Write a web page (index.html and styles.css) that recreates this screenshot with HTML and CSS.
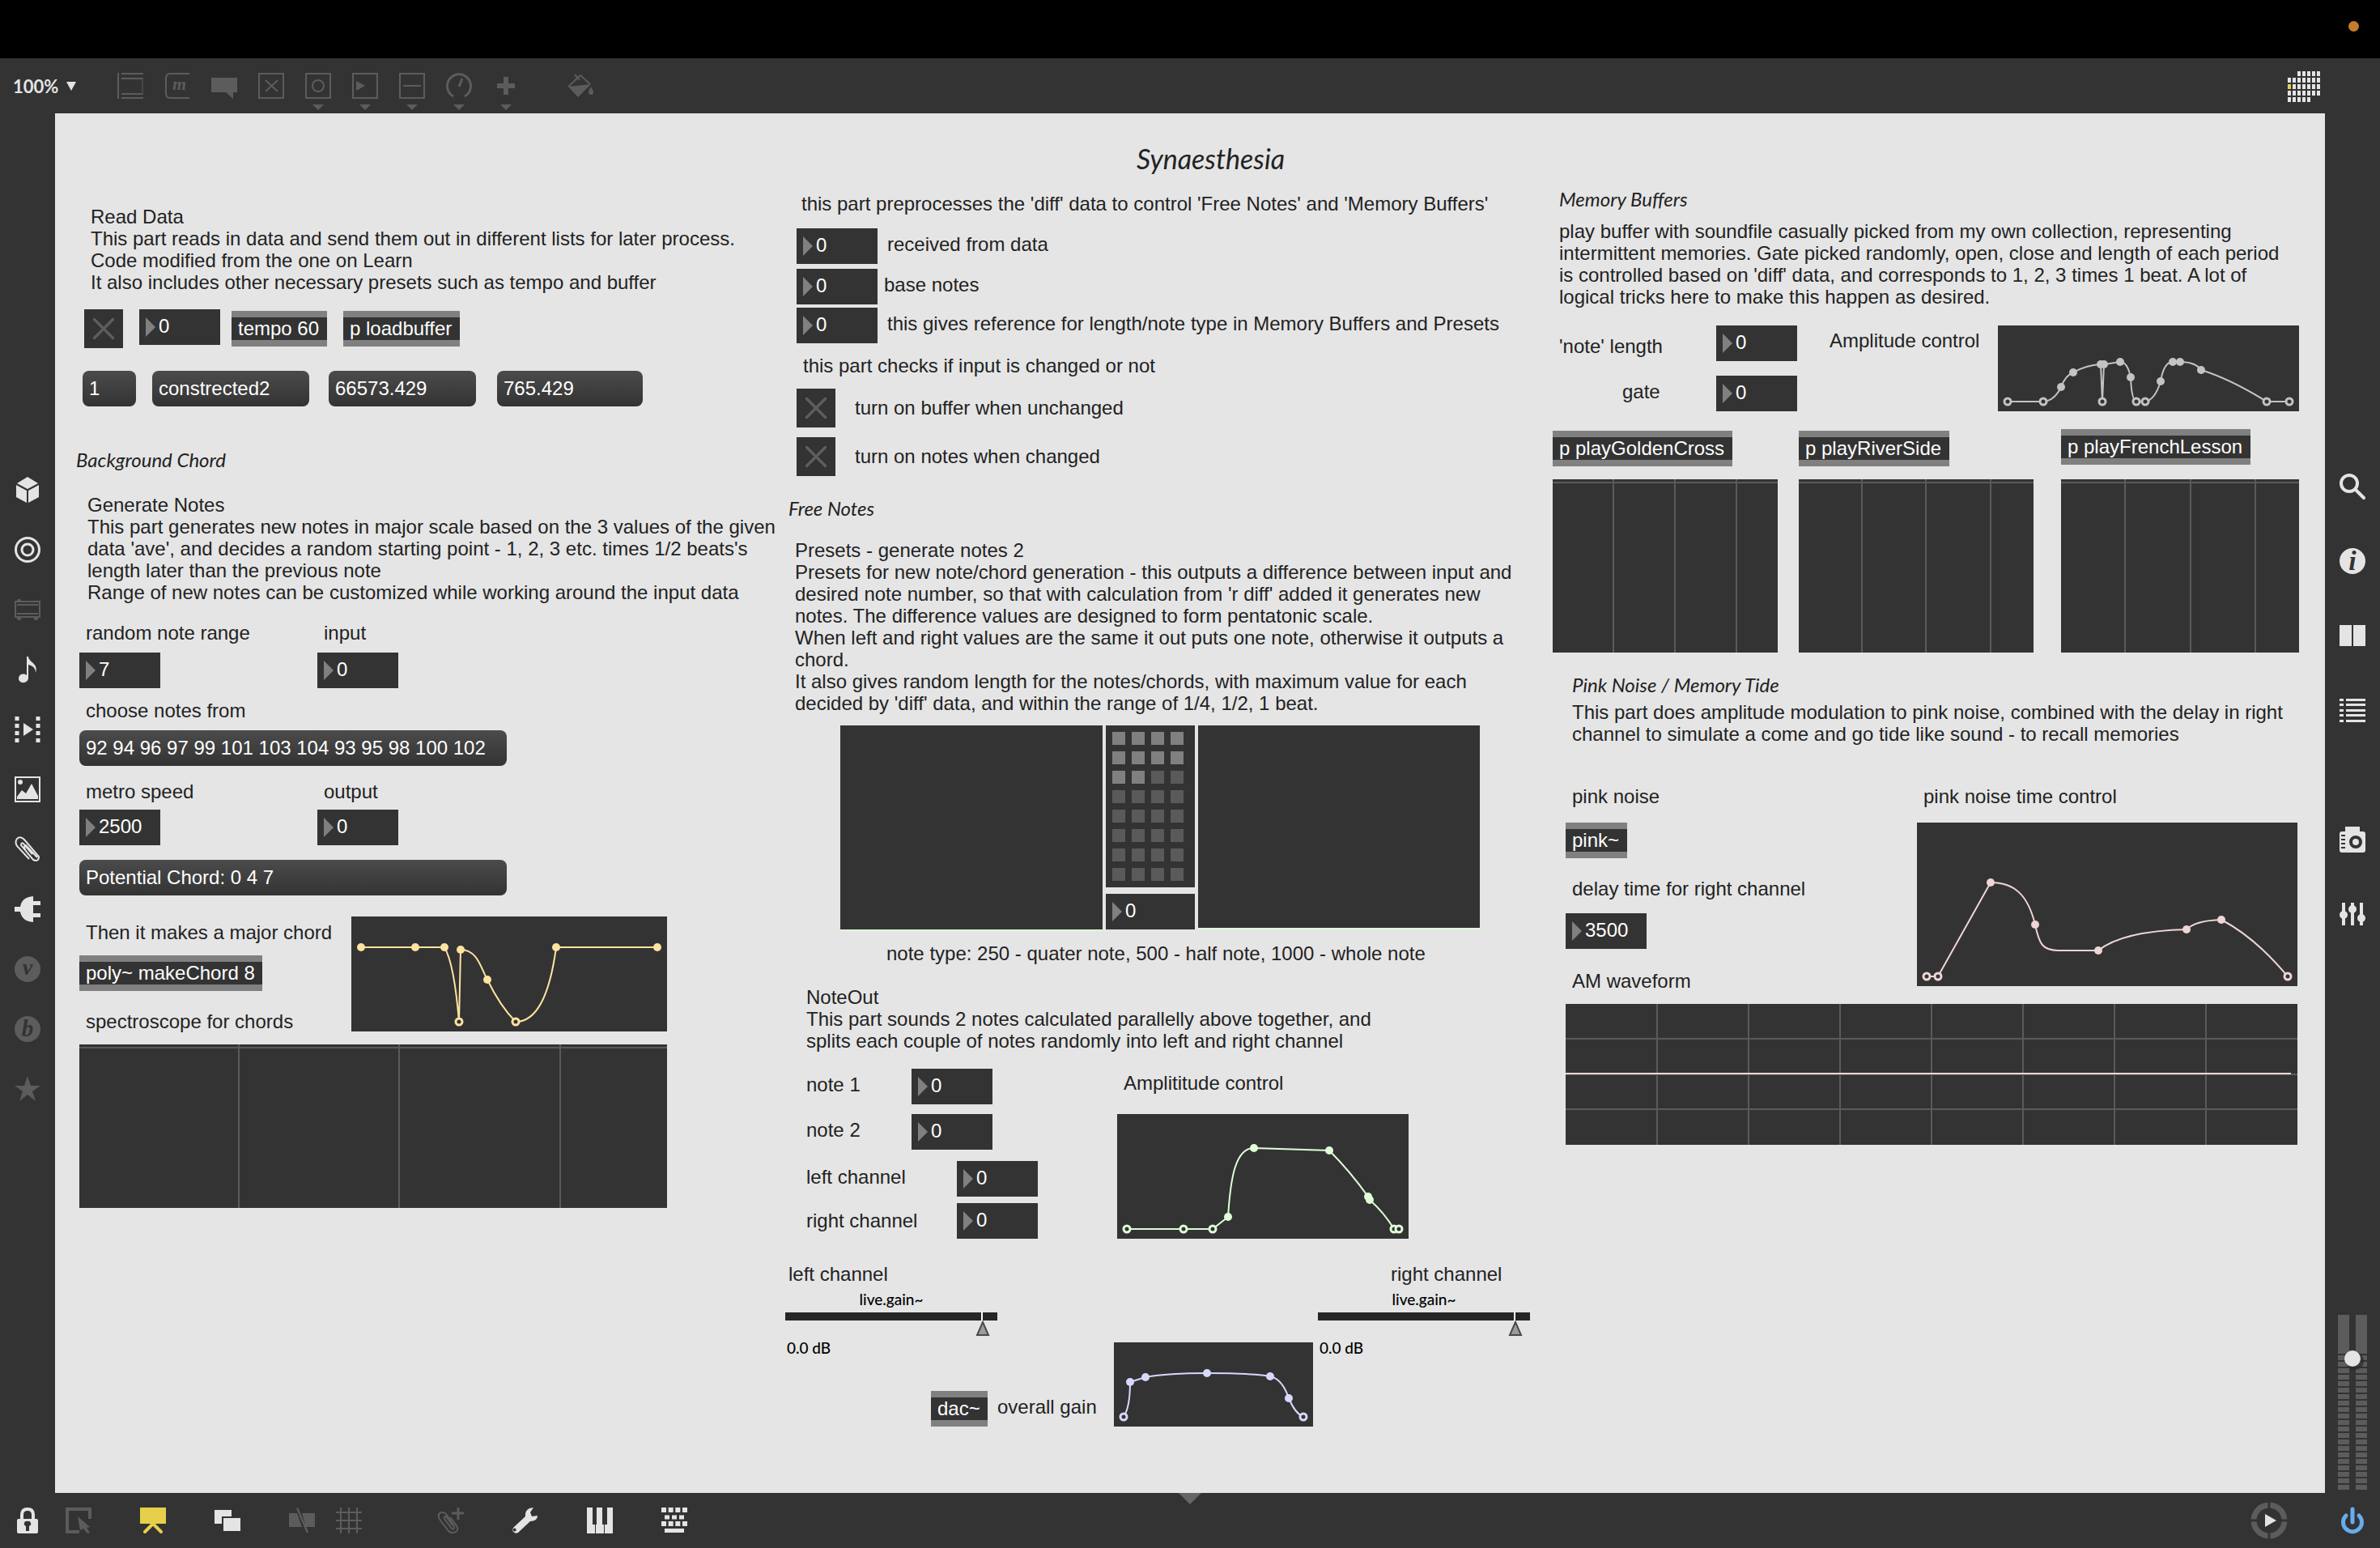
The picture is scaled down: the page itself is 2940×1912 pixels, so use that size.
FILE: index.html
```html
<!DOCTYPE html>
<html lang="en">
<head>
<meta charset="utf-8">
<title>Synaesthesia</title>
<link rel="stylesheet" href="styles.css">
</head>
<body>
<div class="app">
  <div class="menubar"><span class="mic-dot"></span></div>

  <header class="toolbar">
    <div class="zoom">
      <select class="zoom-select" aria-label="Zoom"><option>100%</option></select>
      <svg class="zoom-caret" viewBox="0 0 12 11"><path d="M0 0H12L6 11Z"/></svg>
    </div>
    <div class="tools">
      <button class="tool" aria-label="Object"><svg class="icon" viewBox="0 0 32 32"><path d="M1 0V32M5 1H32M5 7H32M5 26H32M5 31H32" class="line"/><path d="M31 7V26" stroke="#464646" stroke-width="2"/></svg></button>
      <button class="tool" aria-label="Message"><svg class="icon" viewBox="0 0 32 32"><path d="M31 1H7Q2 1 2 7V25Q2 31 7 31H31" class="line"/><text x="10" y="21" class="serif" font-size="22">m</text></svg></button>
      <button class="tool" aria-label="Comment"><svg class="icon" viewBox="0 0 32 32"><path d="M0 6H32V24H27V32L18 24H0Z"/></svg></button>
      <button class="tool" aria-label="Toggle"><svg class="icon" viewBox="0 0 32 32"><path d="M1 1H31V31H1ZM9 9L24 23M24 9L9 23" class="line"/></svg></button>
      <button class="tool" aria-label="Button"><svg class="icon" viewBox="0 0 32 32"><path d="M1 1H31V31H1Z" class="line"/><circle cx="16" cy="16" r="7" class="line"/></svg><svg class="caret" viewBox="0 0 14 7"><path d="M0 0H14L7 7Z"/></svg></button>
      <button class="tool" aria-label="Number"><svg class="icon" viewBox="0 0 32 32"><path d="M1 1H31V31H1Z" class="line"/><path d="M5 10L16 16L5 22Z"/></svg><svg class="caret" viewBox="0 0 14 7"><path d="M0 0H14L7 7Z"/></svg></button>
      <button class="tool" aria-label="Slider"><svg class="icon" viewBox="0 0 32 32"><path d="M1 1H31V31H1ZM5 16H27" class="line"/></svg><svg class="caret" viewBox="0 0 14 7"><path d="M0 0H14L7 7Z"/></svg></button>
      <button class="tool" aria-label="Dial"><svg class="icon" viewBox="0 0 32 32"><path d="M9 29A14.500 14.500 0 1 1 23 29" class="line thick"/><path d="M16 17L20 7" class="line thick"/></svg><svg class="caret" viewBox="0 0 14 7"><path d="M0 0H14L7 7Z"/></svg></button>
      <button class="tool" aria-label="Add"><svg class="icon" viewBox="0 0 32 32"><path d="M13 5H19V13H27V19H19V27H13V19H5V13H13Z"/></svg><svg class="caret" viewBox="0 0 14 7"><path d="M0 0H14L7 7Z"/></svg></button>
      <button class="tool paint" aria-label="Format"><svg class="icon" viewBox="0 0 32 32"><path d="M1 17L29 14L13 30Z"/><path d="M1 17L16 3L28 14M9 2L15 9M9 9L15 4" class="line"/><path d="M29 17Q32 22 32 24A3 3 0 0 1 26 24Q26 21 29 17Z"/></svg></button>
    </div>
    <button class="tool calendar" aria-label="Patching calendar"><svg viewBox="0 0 40 38" width="40" height="38" class="bright">
      <path d="M12 3H40M0 11H40M6 19H40M0 27H40M0 35H28" fill="none" stroke="#e4e4e4" stroke-width="6" stroke-dasharray="4 2"/><path d="M0 16H4V22H0Z" fill="#e6d04b"/></svg></button>
  </header>

  <nav class="side left">
    <button class="side-btn" aria-label="Packages"><svg class="icon" viewBox="0 0 32 32"><path d="M16 0L29 8L16 15L3 8ZM2 10L15 17V32L2 25ZM30 10L17 17V32L30 25Z"/></svg></button>
    <button class="side-btn" aria-label="Objects"><svg class="icon" viewBox="0 0 32 32"><circle cx="16" cy="16" r="14.500" class="line thick"/><circle cx="16" cy="16" r="7" class="line thick"/></svg></button>
    <button class="side-btn dim" aria-label="Amp"><svg class="icon" viewBox="0 0 32 32"><path d="M1 6H31V25H1ZM3 10H29M3 21H29" class="line"/><path d="M3 5V4Q6 1 8 4V5ZM3 26H8V28Q6 30 3 28ZM24 26H29V28Q27 30 24 28Z"/></svg></button>
    <button class="side-btn" aria-label="Audio"><svg class="icon" viewBox="0 0 32 32"><path d="M15 0H17C18 8 30 8 26 20C26 13 21 11 17 10V26C17 34 5 34 5 27C5 22 11 20 15 23Z"/></svg></button>
    <button class="side-btn" aria-label="Video"><svg class="icon" viewBox="0 0 32 32"><path d="M3 0V32M29 0V32" fill="none" stroke="#e4e4e4" stroke-width="5" stroke-dasharray="5 4"/><path d="M11 8L23 16L11 24Z"/></svg></button>
    <button class="side-btn" aria-label="Images"><svg class="icon" viewBox="0 0 32 32"><path d="M1 1H31V31H1Z" class="line"/><circle cx="7" cy="7" r="3"/><path d="M3 28V25L9 17L14 21L21 9L29 24V28Z"/></svg></button>
    <button class="side-btn" aria-label="Files"><svg class="icon" viewBox="0 0 32 32"><path d="M22 22L11 9Q8 7 8 11L23 29Q30 32 30 25L12 4Q7 -1 3 3Q0 7 3 12L18 28M14 18Q10 12 14 11L28 26" class="line"/></svg></button>
    <button class="side-btn" aria-label="Plug-ins"><svg class="icon" viewBox="0 0 32 32"><path d="M23 0V6H32V11H23V21H32V26H23V32Q9 31 7 19H0V13H7Q9 1 23 0Z"/></svg></button>
    <button class="side-btn dim" aria-label="Vizzie"><svg class="icon" viewBox="0 0 32 32"><circle cx="16" cy="16" r="16"/><text x="16" y="23" class="serif cut" font-size="28">v</text></svg></button>
    <button class="side-btn dim" aria-label="Beap"><svg class="icon" viewBox="0 0 32 32"><circle cx="16" cy="16" r="16"/><text x="16" y="25" class="serif cut" font-size="29">b</text></svg></button>
    <button class="side-btn dim" aria-label="Favorites"><svg class="icon" viewBox="0 0 32 32"><path d="M16 0L20 12H32L22 19L26 31L16 23L6 31L10 19L0 12H12Z"/></svg></button>
  </nav>

  <main class="patcher">
    <h1 class="obj title">Synaesthesia</h1>

    <p class="obj comment c-read">Read Data<br>This part reads in data and send them out in different lists for later process.<br>Code modified from the one on Learn<br>It also includes other necessary presets such as tempo and buffer</p>
    <input type="checkbox" class="obj toggle t-read" aria-label="Read data">
    <span class="obj number n-tempo"><input value="0" aria-label="Tempo"></span>
    <div class="obj box b-tempo">tempo 60</div>
    <div class="obj box b-load">p loadbuffer</div>
    <button class="obj message m-index">1</button>
    <button class="obj message m-name">constrected2</button>
    <button class="obj message m-sum">66573.429</button>
    <button class="obj message m-ave">765.429</button>

    <h2 class="obj heading h-chord">Background Chord</h2>
    <p class="obj comment c-generate">Generate Notes<br>This part generates new notes in major scale based on the 3 values of the given<br>data 'ave', and decides a random starting point - 1, 2, 3 etc. times 1/2 beats's<br>length later than the previous note<br>Range of new notes can be customized while working around the input data</p>
    <label class="obj comment c-range" for="range">random note range</label>
    <label class="obj comment c-input" for="input">input</label>
    <span class="obj number n-range"><input id="range" value="7"></span>
    <span class="obj number n-input"><input id="input" value="0"></span>
    <p class="obj comment c-choose">choose notes from</p>
    <button class="obj message m-notes">92 94 96 97 99 101 103 104 93 95 98 100 102</button>
    <label class="obj comment c-metro" for="metro">metro speed</label>
    <label class="obj comment c-output" for="output">output</label>
    <span class="obj number n-metro"><input id="metro" value="2500"></span>
    <span class="obj number n-output"><input id="output" value="0"></span>
    <button class="obj message m-potential">Potential Chord: 0 4 7</button>
    <p class="obj comment c-then">Then it makes a major chord</p>
    <div class="obj box b-poly">poly~ makeChord 8</div>
    <p class="obj comment c-spectro">spectroscope for chords</p>
    <svg class="obj function f-chord" viewBox="434 1132 390 142">
      <path d="M446 1170H549Q561 1190 567 1262L569 1173C590 1173 594 1196 602 1210Q618 1243 637 1262C668 1262 681 1215 687 1170H812"/>
      <g class="dots"><circle cx="446" cy="1170" r="5"/><circle cx="513" cy="1170" r="5"/><circle cx="549" cy="1170" r="5"/><circle cx="569" cy="1173" r="5"/><circle cx="602" cy="1210" r="5"/><circle cx="687" cy="1170" r="5"/><circle cx="812" cy="1170" r="5"/></g>
      <g class="rings"><circle cx="567" cy="1262" r="4"/><circle cx="637" cy="1262" r="4"/></g>
    </svg>
    <div class="obj spectrum s-chord"></div>

    <p class="obj comment c-pre">this part preprocesses the 'diff' data to control 'Free Notes' and 'Memory Buffers'</p>
    <span class="obj number n-received"><input id="received" value="0"></span>
    <label class="obj comment c-received" for="received">received from data</label>
    <span class="obj number n-base"><input id="base" value="0"></span>
    <label class="obj comment c-base" for="base">base notes</label>
    <span class="obj number n-ref"><input id="ref" value="0"></span>
    <label class="obj comment c-ref" for="ref">this gives reference for length/note type in Memory Buffers and Presets</label>
    <p class="obj comment c-checks">this part checks if input is changed or not</p>
    <input type="checkbox" id="unchanged" class="obj toggle t-unchanged">
    <label class="obj comment c-unchanged" for="unchanged">turn on buffer when unchanged</label>
    <input type="checkbox" id="changed" class="obj toggle t-changed">
    <label class="obj comment c-changed" for="changed">turn on notes when changed</label>

    <h2 class="obj heading h-free">Free Notes</h2>
    <p class="obj comment c-presets">Presets - generate notes 2<br>Presets for new note/chord generation - this outputs a difference between input and<br>desired note number, so that with calculation from 'r diff' added it generates new<br>notes. The difference values are designed to form pentatonic scale.<br>When left and right values are the same it out puts one note, otherwise it outputs a<br>chord.<br>It also gives random length for the notes/chords, with maximum value for each<br>decided by 'diff' data, and within the range of 1/4, 1/2, 1 beat.</p>
    <div class="obj multislider ms-left"></div>
    <div class="obj preset">
      <i class="on"></i><i class="on"></i><i class="on"></i><i class="on"></i><i class="on"></i><i class="on"></i><i class="on"></i><i class="on"></i><i class="on"></i><i class="on"></i><i></i><i></i><i></i><i></i><i></i><i></i><i></i><i></i><i></i><i></i><i></i><i></i><i></i><i></i><i></i><i></i><i></i><i></i><i></i><i></i><i></i><i></i>
    </div>
    <span class="obj number n-preset"><input value="0" aria-label="Preset"></span>
    <div class="obj multislider ms-right"></div>
    <p class="obj comment c-type">note type: 250 - quater note, 500 - half note, 1000 - whole note</p>
    <p class="obj comment c-noteout">NoteOut<br>This part sounds 2 notes calculated parallelly above together, and<br>splits each couple of notes randomly into left and right channel</p>
    <label class="obj comment c-note1" for="note1">note 1</label>
    <span class="obj number n-note1"><input id="note1" value="0"></span>
    <label class="obj comment c-note2" for="note2">note 2</label>
    <span class="obj number n-note2"><input id="note2" value="0"></span>
    <label class="obj comment c-left" for="left">left channel</label>
    <span class="obj number n-left"><input id="left" value="0"></span>
    <label class="obj comment c-right" for="right">right channel</label>
    <span class="obj number n-right"><input id="right" value="0"></span>
    <p class="obj comment c-amp">Amplititude control</p>
    <svg class="obj function f-notes" viewBox="1380 1376 360 154">
      <path d="M1392 1518H1498L1517 1503C1520 1455 1526 1418 1549 1418L1642 1421Q1668 1447 1690 1478L1692 1482Q1710 1498 1722 1518H1728"/>
      <g class="dots"><circle cx="1517" cy="1503" r="5"/><circle cx="1549" cy="1418" r="5"/><circle cx="1642" cy="1421" r="5"/><circle cx="1690" cy="1478" r="5"/><circle cx="1692" cy="1482" r="5"/></g>
      <g class="rings"><circle cx="1392" cy="1518" r="4"/><circle cx="1462" cy="1518" r="4"/><circle cx="1498" cy="1518" r="4"/><circle cx="1722" cy="1518" r="4"/><circle cx="1728" cy="1518" r="4"/></g>
    </svg>
    <p class="obj comment c-gain-left">left channel</p>
    <div class="obj gain g-left">
      <label for="gain-left">live.gain~</label>
      <div class="gain-track"><input type="range" id="gain-left" min="0" max="244" value="235"><svg viewBox="0 0 18 19"><path d="M9 2L16 18H2Z"/></svg></div>
      <output>0.0 dB</output>
    </div>
    <p class="obj comment c-gain-right">right channel</p>
    <div class="obj gain g-right">
      <label for="gain-right">live.gain~</label>
      <div class="gain-track"><input type="range" id="gain-right" min="0" max="244" value="235"><svg viewBox="0 0 18 19"><path d="M9 2L16 18H2Z"/></svg></div>
      <output>0.0 dB</output>
    </div>
    <div class="obj box b-dac">dac~</div>
    <p class="obj comment c-overall">overall gain</p>
    <svg class="obj function f-gain" viewBox="1376 1658 246 104">
      <path d="M1388 1750Q1396 1738 1396 1707L1415 1701Q1443 1696 1491 1696Q1548 1696 1569 1700Q1584 1703 1592 1727Q1600 1746 1610 1750"/>
      <g class="dots"><circle cx="1396" cy="1707" r="5"/><circle cx="1415" cy="1701" r="5"/><circle cx="1491" cy="1696" r="5"/><circle cx="1569" cy="1700" r="5"/><circle cx="1592" cy="1727" r="5"/></g>
      <g class="rings"><circle cx="1388" cy="1750" r="4"/><circle cx="1610" cy="1750" r="4"/></g>
    </svg>

    <h2 class="obj heading h-memory">Memory Buffers</h2>
    <p class="obj comment c-play">play buffer with soundfile casually picked from my own collection, representing<br>intermittent memories. Gate picked randomly, open, close and length of each period<br>is controlled based on 'diff' data, and corresponds to 1, 2, 3 times 1 beat. A lot of<br>logical tricks here to make this happen as desired.</p>
    <label class="obj comment c-length" for="length">'note' length</label>
    <span class="obj number n-length"><input id="length" value="0"></span>
    <label class="obj comment c-gate" for="gate">gate</label>
    <span class="obj number n-gate"><input id="gate" value="0"></span>
    <p class="obj comment c-amplitude">Amplitude control</p>
    <svg class="obj function f-memory" viewBox="2468 402 372 106">
      <path d="M2480 496H2524Q2538 495 2546 478Q2552 463 2561 460Q2577 451 2595 450L2597 496L2599 450L2619 447Q2628 447 2632 466Q2633 494 2639 496H2650Q2662 494 2669 471Q2673 447 2684 447H2693Q2712 447 2719 457Q2755 468 2800 496H2828"/>
      <g class="dots"><circle cx="2546" cy="478" r="5"/><circle cx="2561" cy="460" r="5"/><circle cx="2595" cy="450" r="5"/><circle cx="2599" cy="450" r="5"/><circle cx="2619" cy="447" r="5"/><circle cx="2632" cy="466" r="5"/><circle cx="2669" cy="471" r="5"/><circle cx="2684" cy="447" r="5"/><circle cx="2693" cy="447" r="5"/><circle cx="2719" cy="457" r="5"/></g>
      <g class="rings"><circle cx="2480" cy="496" r="4"/><circle cx="2524" cy="496" r="4"/><circle cx="2597" cy="496" r="4"/><circle cx="2639" cy="496" r="4"/><circle cx="2650" cy="496" r="4"/><circle cx="2800" cy="496" r="4"/><circle cx="2828" cy="496" r="4"/></g>
    </svg>
    <div class="obj box b-golden">p playGoldenCross</div>
    <div class="obj box b-river">p playRiverSide</div>
    <div class="obj box b-french">p playFrenchLesson</div>
    <div class="obj spectrum s-golden"></div>
    <div class="obj spectrum s-river"></div>
    <div class="obj spectrum s-french"></div>

    <h2 class="obj heading h-pink">Pink Noise / Memory Tide</h2>
    <p class="obj comment c-tide">This part does amplitude modulation to pink noise, combined with the delay in right<br>channel to simulate a come and go tide like sound - to recall memories</p>
    <p class="obj comment c-pink">pink noise</p>
    <div class="obj box b-pink">pink~</div>
    <label class="obj comment c-delay" for="delay">delay time for right channel</label>
    <span class="obj number n-delay"><input id="delay" value="3500"></span>
    <p class="obj comment c-time">pink noise time control</p>
    <svg class="obj function f-pink" viewBox="2368 1016 470 202">
      <path d="M2380 1206H2394L2459 1090C2488 1090 2505 1105 2514 1142C2519 1166 2523 1174 2543 1174H2592Q2622 1150 2701 1148Q2712 1137 2744 1136Q2786 1158 2826 1206"/>
      <g class="dots"><circle cx="2459" cy="1090" r="5"/><circle cx="2514" cy="1142" r="5"/><circle cx="2592" cy="1174" r="5"/><circle cx="2701" cy="1148" r="5"/><circle cx="2744" cy="1136" r="5"/></g>
      <g class="rings"><circle cx="2380" cy="1206" r="4"/><circle cx="2394" cy="1206" r="4"/><circle cx="2826" cy="1206" r="4"/></g>
    </svg>
    <p class="obj comment c-am">AM waveform</p>
    <svg class="obj scope" viewBox="0 0 904 174">
      <path d="M113 0V174M226 0V174M339 0V174M452 0V174M565 0V174M678 0V174M791 0V174M0 43H904M0 87H904M0 130H904" stroke="#5a5a5a"/>
      <path d="M0 86H896" stroke="#efd5d5"/>
    </svg>
  </main>

  <aside class="side right">
    <button class="side-btn" aria-label="Search"><svg class="icon" viewBox="0 0 32 32"><circle cx="12" cy="12" r="10" class="line fat"/><path d="M20 20L30 30" class="line fat" stroke-linecap="round"/></svg></button>
    <button class="side-btn" aria-label="Inspector"><svg class="icon" viewBox="0 0 32 32"><circle cx="16" cy="16" r="16"/><text x="16" y="27" class="serif cut" font-size="34">i</text></svg></button>
    <button class="side-btn" aria-label="Reference"><svg class="icon" viewBox="0 0 32 32"><path d="M0 3H15V29H0ZM17 3H32V29H17Z"/></svg></button>
    <button class="side-btn" aria-label="Console"><svg class="icon" viewBox="0 0 32 32"><path d="M0 2H5V5H0ZM8 2H32V5H8ZM0 8H5V11H0ZM8 8H32V11H8ZM0 15H5V18H0ZM8 15H32V18H8ZM0 21H5V24H0ZM8 21H32V24H8ZM0 28H5V31H0ZM8 28H32V31H8Z"/></svg></button>
    <button class="side-btn snapshots" aria-label="Snapshots"><svg class="icon" viewBox="0 0 32 32"><path d="M7 6V0H25V6H29Q32 6 32 9V29Q32 32 29 32H3Q0 32 0 29V9Q0 6 3 6Z"/><path d="M2 11H7M2 16H7M2 21H7M2 26H7" stroke="#333" stroke-width="2"/><circle cx="20" cy="19" r="6" fill="none" stroke="#333" stroke-width="4"/></svg></button>
    <button class="side-btn" aria-label="Parameters"><svg class="icon" viewBox="0 0 32 32"><path d="M5 2V30M16 2V30M27 2V30" class="line fat"/><circle cx="5" cy="17" r="5"/><circle cx="16" cy="10" r="5"/><circle cx="27" cy="21" r="5"/></svg></button>
    <svg class="meter" viewBox="0 0 36 216">
      <path d="M0 0H14V48H0ZM22 0H36V48H22Z" fill="#5c5c5c"/>
      <path d="M7 50V216M29 50V216" stroke="#5c5c5c" stroke-width="14" stroke-dasharray="6 2"/>
      <circle cx="21" cy="57" r="11" fill="#2a2a2a" opacity=".7"/>
      <circle cx="18" cy="54" r="10" fill="#e4e4e4"/>
    </svg>
  </aside>

  <footer class="bottombar">
    <svg class="notch" viewBox="0 0 28 14"><path d="M0 0H28L14 14Z"/></svg>
    <div class="group lock">
      <button class="tool" aria-label="Lock"><svg class="icon bright" viewBox="0 0 32 32"><path d="M9 16V9Q9 2 16 2Q23 2 23 9V16" class="line fat"/><path fill-rule="evenodd" d="M5 14H27Q29 14 29 16V30Q29 32 27 32H5Q3 32 3 30V16Q3 14 5 14ZM16 17A3 3 0 0 0 14 23V29H18V23A3 3 0 0 0 16 17Z"/></svg></button>
      <button class="tool" aria-label="Select"><svg class="icon" viewBox="0 0 32 32"><path d="M30 14V2H2V30H17" class="line fat"/><path d="M15 11L30 24L26 25L30 31L27 32L22 26L18 28Z"/></svg></button>
    </div>
    <button class="tool" aria-label="Presentation"><svg class="icon yellow" viewBox="0 0 32 32"><path d="M0 0H32V20H0Z"/><path d="M16 20L6 30M16 20L26 30" class="line fat" stroke-linecap="round"/></svg></button>
    <button class="tool" aria-label="Windows"><svg class="icon bright" viewBox="0 0 32 32"><path d="M0 3H21V11H9V20H0ZM11 13H32V29H11Z"/></svg></button>
    <div class="group pair">
      <button class="tool" aria-label="Mirror"><svg class="icon" viewBox="0 0 32 32"><path d="M0 7H10L16 24H0ZM16 7H32V24H21ZM9 1L11 0L24 30L22 32Z"/></svg></button>
      <button class="tool" aria-label="Grid"><svg class="icon" viewBox="0 0 32 32"><path d="M6 0V32M16 0V32M26 0V32M0 6H32M0 16H32M0 26H32" class="line"/></svg></button>
    </div>
    <button class="tool clip" aria-label="Add clip"><svg class="icon" viewBox="0 0 32 32"><path d="M18 22L10 11Q7 11 8 14L17 26Q21 28 20 23L10 8Q5 4 1 8Q0 12 3 16L14 30Q20 33 24 28Q25 25 22 21L15 12" class="line"/><path d="M25 0V15M17 7H32" class="line thick"/></svg></button>
    <button class="tool" aria-label="Tools"><svg class="icon bright" viewBox="0 0 32 32"><path fill-rule="evenodd" d="M26 0L22 6L24 11L31 10Q31 17 22 17L7 31Q4 33 1 30Q-1 27 2 24L16 11Q15 1 26 0ZM4 26A2 2 0 1 0 4 29A2 2 0 0 0 4 26Z"/></svg></button>
    <button class="tool" aria-label="Piano"><svg class="icon bright" viewBox="0 0 32 32"><path d="M0 0H7V21H10V32H0ZM12 0H19V21H21V32H11V21H12ZM25 0H32V32H22V21H25Z"/></svg></button>
    <button class="tool" aria-label="Keyboard"><svg class="icon bright" viewBox="0 0 32 32"><path d="M0 3H32M0 20H32" fill="none" stroke="#e4e4e4" stroke-width="6" stroke-dasharray="6 2.660"/><path d="M4 12H28" fill="none" stroke="#e4e4e4" stroke-width="5" stroke-dasharray="6 3"/><path d="M4 26H28V31H4Z"/></svg></button>
    <div class="group transport">
      <button class="tool" aria-label="Play"><svg viewBox="0 0 46 46" width="46" height="46"><circle cx="23" cy="23" r="19" fill="none" stroke="#5c5c5c" stroke-width="7"/><path d="M23 0V46M0 23H46" stroke="#333" stroke-width="3"/><path d="M18 15L32 23L18 31Z" fill="#e4e4e4"/></svg></button>
      <button class="tool" aria-label="Audio on"><svg class="icon" viewBox="0 0 32 32"><path d="M8 10A11.500 11.500 0 1 0 24 10M16 2V18" fill="none" stroke="#66adec" stroke-width="5" stroke-linecap="round"/></svg></button>
    </div>
  </footer>
</div>
</body>
</html>
```
FILE: styles.css
```css
* { box-sizing: border-box; }

body {
  margin: 0;
  background: #333;
  font-family: "Liberation Sans", Arial, sans-serif;
  font-size: 24px;
  line-height: 27px;
  color: #222;
}

h1, h2, p { margin: 0; font-size: inherit; font-weight: normal; }

button, input, select {
  margin: 0;
  padding: 0;
  border: 0;
  border-radius: 0;
  background: none;
  font: inherit;
  color: inherit;
}

svg { display: block; }

.app {
  display: grid;
  grid-template-columns: 68px minmax(0, 1fr) 68px;
  grid-template-rows: 72px 68px minmax(0, 1fr) 68px;
  min-height: 100vh;
}

/* Top strip */
.menubar {
  grid-column: 1 / -1;
  background: #000;
  display: flex;
  justify-content: flex-end;
  padding: 26px 26px 0 0;
}
.mic-dot {
  width: 13px;
  height: 13px;
  border-radius: 50%;
  background: #c47b2c;
}

/* Toolbar and shared icon styles */
.toolbar {
  grid-column: 1 / -1;
  display: flex;
  align-items: stretch;
  padding: 0 74px 0 16px;
}
.zoom {
  width: 129px;
  display: flex;
  align-items: center;
  gap: 8px;
}
.zoom-select {
  appearance: none;
  width: 58px;
  font-family: Lato, sans-serif;
  font-size: 22px;
  font-weight: bold;
  color: #e4e4e4;
}
.zoom-caret { width: 12px; height: 11px; fill: #e4e4e4; }
.tools { display: flex; gap: 26px; }
.tool {
  display: flex;
  flex-direction: column;
  align-items: center;
  fill: #5c5c5c;
  stroke: none;
  --ink: #5c5c5c;
}
.tools .tool { padding-top: 18px; gap: 7px; }
.tools .paint { margin-left: 34px; }
.calendar { margin-left: auto; padding-top: 16px; }
.icon { width: 32px; height: 32px; overflow: visible; }
.caret { width: 14px; height: 7px; }
.line { fill: none; stroke: var(--ink); stroke-width: 2; }
.thick { stroke-width: 3; }
.fat { stroke-width: 4; }
.bright { fill: #e4e4e4; --ink: #e4e4e4; }
.yellow { fill: #e6d04b; --ink: #e6d04b; }
.serif { font-family: "Liberation Serif", serif; font-style: italic; font-weight: bold; }
.cut { fill: #333; text-anchor: middle; }

/* Side bars */
.side {
  display: flex;
  flex-direction: column;
  align-items: center;
}
.side-btn { fill: #e4e4e4; --ink: #e4e4e4; }
.side-btn.dim { fill: #5c5c5c; --ink: #5c5c5c; }
.left { justify-content: center; gap: 42px; padding-bottom: 34px; }
.right { gap: 60px; padding: 445px 0 4px; }
.snapshots { margin-top: 68px; }
.meter { width: 36px; height: 216px; margin-top: auto; }

/* Bottom bar */
.bottombar {
  grid-column: 1 / -1;
  position: relative;
  display: flex;
  align-items: center;
  gap: 60px;
  padding: 0 18px;
}
.group { display: flex; align-items: center; }
.lock { gap: 31px; }
.pair { gap: 26px; }
.clip { margin-left: 34px; }
.transport { gap: 64px; margin-left: auto; }
.notch {
  position: absolute;
  top: 0;
  left: calc(50% - 14px);
  width: 28px;
  height: 14px;
  fill: #666;
}

/* Patcher: a free canvas, each object placed at its own coordinates */
.patcher { position: relative; background: #e5e5e5; min-height: 1704px; overflow: hidden; }
.obj { position: absolute; }

.title, .heading { font-family: Lato, sans-serif; font-style: italic; white-space: nowrap; }
.title { font-size: 34px; line-height: 40px; }
.heading { font-size: 24px; }
.comment { padding-left: 1px; white-space: nowrap; }

.number {
  width: 100px;
  height: 44px;
  background: #333;
  padding-left: 24px;
  color: #fff;
}
.number::before {
  content: "";
  position: absolute;
  left: 8px;
  top: 10px;
  border-left: 12px solid #808080;
  border-top: 12px solid transparent;
  border-bottom: 12px solid transparent;
}
.number input { display: block; width: 100%; height: 42px; }

.box {
  height: 44px;
  line-height: 28px;
  padding: 0 8px;
  background: #333;
  border: solid #808080;
  border-width: 8px 0;
  color: #fff;
  white-space: nowrap;
}

.message {
  height: 44px;
  padding: 0 8px 2px;
  border-radius: 8px;
  background: linear-gradient(#4b4b4b, #333);
  color: #fff;
  text-align: left;
  white-space: nowrap;
}

.toggle {
  appearance: none;
  width: 48px;
  height: 48px;
  background:
    linear-gradient(45deg, transparent 46%, #5c5c5c 46% 54%, transparent 54%) center / 26px 26px no-repeat,
    linear-gradient(-45deg, transparent 46%, #5c5c5c 46% 54%, transparent 54%) center / 26px 26px no-repeat,
    #333;
}

.spectrum {
  background:
    linear-gradient(#5a5a5a, #5a5a5a) 0 3px / 100% 2px no-repeat,
    repeating-linear-gradient(90deg, transparent 0 calc(27.3% - 2px), #5a5a5a calc(27.3% - 2px) 27.3%),
    #333;
}
.scope { background: #333; stroke-width: 2; }

.function { background: #333; fill: none; stroke: var(--curve); stroke-width: 2; }
.dots { fill: var(--curve); stroke: none; }
.rings { fill: #333; stroke-width: 3; }

.multislider { background: #333; border-bottom: 2px solid #dfffd8; }

.preset {
  display: grid;
  grid-template-columns: repeat(4, 16px);
  grid-auto-rows: 16px;
  gap: 8px;
  padding: 8px;
  background: #333;
}
.preset i { background: #5a5a5a; }
.preset .on { background: #808080; }

.gain {
  width: 262px;
  display: flex;
  flex-direction: column;
  font-family: Lato, sans-serif;
  font-size: 19px;
  font-weight: 500;
  line-height: 24px;
  color: #000;
}
.gain label { text-align: center; }
.gain output { padding-left: 2px; }
.gain-track {
  position: relative;
  height: 30px;
  margin: 4px 0 2px;
  background:
    linear-gradient(#fff, #fff) 242px 0 / 2px 10px no-repeat,
    linear-gradient(#262626, #262626) 0 0 / 100% 10px no-repeat;
}
.gain-track input { appearance: none; display: block; width: 100%; height: 30px; opacity: 0; }
.gain-track svg {
  position: absolute;
  left: 235px;
  top: 10px;
  width: 18px;
  height: 19px;
  fill: #9c9c9c;
  stroke: #4a4a4a;
  stroke-width: 2;
  pointer-events: none;
}

/* Object coordinates */
.title { left: 1336px; top: 36px; }

.c-read { left: 43px; top: 114px; }
.t-read { left: 36px; top: 242px; }
.n-tempo { left: 104px; top: 242px; }
.b-tempo { left: 218px; top: 244px; width: 118px; }
.b-load { left: 356px; top: 244px; width: 144px; }
.m-index { left: 34px; top: 318px; width: 66px; }
.m-name { left: 120px; top: 318px; width: 194px; }
.m-sum { left: 338px; top: 318px; width: 182px; }
.m-ave { left: 546px; top: 318px; width: 180px; }

.h-chord { left: 26px; top: 414px; }
.c-generate { left: 39px; top: 470px; }
.c-range { left: 37px; top: 628px; }
.c-input { left: 331px; top: 628px; }
.n-range { left: 30px; top: 666px; }
.n-input { left: 324px; top: 666px; }
.c-choose { left: 37px; top: 724px; }
.m-notes { left: 30px; top: 762px; width: 528px; }
.c-metro { left: 37px; top: 824px; }
.c-output { left: 331px; top: 824px; }
.n-metro { left: 30px; top: 860px; }
.n-output { left: 324px; top: 860px; }
.m-potential { left: 30px; top: 922px; width: 528px; }
.c-then { left: 37px; top: 998px; }
.b-poly { left: 30px; top: 1040px; width: 226px; }
.c-spectro { left: 37px; top: 1108px; }
.f-chord { left: 366px; top: 992px; width: 390px; height: 142px; --curve: #fde3a0; }
.s-chord { left: 30px; top: 1150px; width: 726px; height: 202px; }

.c-pre { left: 921px; top: 98px; }
.n-received { left: 916px; top: 142px; }
.c-received { left: 1027px; top: 148px; }
.n-base { left: 916px; top: 192px; }
.c-base { left: 1023px; top: 198px; }
.n-ref { left: 916px; top: 240px; }
.c-ref { left: 1027px; top: 246px; }
.c-checks { left: 923px; top: 298px; }
.t-unchanged { left: 916px; top: 340px; }
.c-unchanged { left: 987px; top: 350px; }
.t-changed { left: 916px; top: 400px; }
.c-changed { left: 987px; top: 410px; }

.h-free { left: 906px; top: 474px; }
.c-presets { left: 913px; top: 526px; }
.ms-left { left: 970px; top: 756px; width: 324px; height: 254px; }
.preset { left: 1298px; top: 756px; width: 110px; height: 200px; }
.n-preset { left: 1298px; top: 964px; width: 110px; }
.ms-right { left: 1412px; top: 756px; width: 348px; height: 252px; }
.c-type { left: 1026px; top: 1024px; }
.c-noteout { left: 927px; top: 1078px; }
.c-note1 { left: 927px; top: 1186px; }
.n-note1 { left: 1058px; top: 1180px; }
.c-note2 { left: 927px; top: 1242px; }
.n-note2 { left: 1058px; top: 1236px; }
.c-left { left: 927px; top: 1300px; }
.n-left { left: 1114px; top: 1294px; }
.c-right { left: 927px; top: 1354px; }
.n-right { left: 1114px; top: 1346px; }
.c-amp { left: 1319px; top: 1184px; }
.f-notes { left: 1312px; top: 1236px; width: 360px; height: 154px; --curve: #dfffd8; }
.c-gain-left { left: 905px; top: 1420px; }
.g-left { left: 902px; top: 1453px; }
.c-gain-right { left: 1649px; top: 1420px; }
.g-right { left: 1560px; top: 1453px; }
.b-dac { left: 1082px; top: 1578px; width: 70px; }
.c-overall { left: 1163px; top: 1584px; }
.f-gain { left: 1308px; top: 1518px; width: 246px; height: 104px; --curve: #d8d8ff; }

.h-memory { left: 1858px; top: 92px; }
.c-play { left: 1857px; top: 132px; }
.c-length { left: 1857px; top: 274px; }
.n-length { left: 2052px; top: 262px; }
.c-gate { left: 1935px; top: 330px; }
.n-gate { left: 2052px; top: 324px; }
.c-amplitude { left: 2191px; top: 267px; }
.f-memory { left: 2400px; top: 262px; width: 372px; height: 106px; --curve: #c3c3c3; }
.b-golden { left: 1850px; top: 392px; width: 222px; }
.b-river { left: 2154px; top: 392px; width: 186px; }
.b-french { left: 2478px; top: 390px; width: 234px; }
.s-golden { left: 1850px; top: 452px; width: 278px; height: 214px; }
.s-river { left: 2154px; top: 452px; width: 290px; height: 214px; }
.s-french { left: 2478px; top: 452px; width: 294px; height: 214px; }

.h-pink { left: 1874px; top: 692px; }
.c-tide { left: 1873px; top: 726px; }
.c-pink { left: 1873px; top: 830px; }
.b-pink { left: 1866px; top: 876px; width: 76px; }
.c-delay { left: 1873px; top: 944px; }
.n-delay { left: 1866px; top: 988px; }
.c-time { left: 2307px; top: 830px; }
.f-pink { left: 2300px; top: 876px; width: 470px; height: 202px; --curve: #efd5d5; }
.c-am { left: 1873px; top: 1058px; }
.scope { left: 1866px; top: 1100px; width: 904px; height: 174px; }
```
